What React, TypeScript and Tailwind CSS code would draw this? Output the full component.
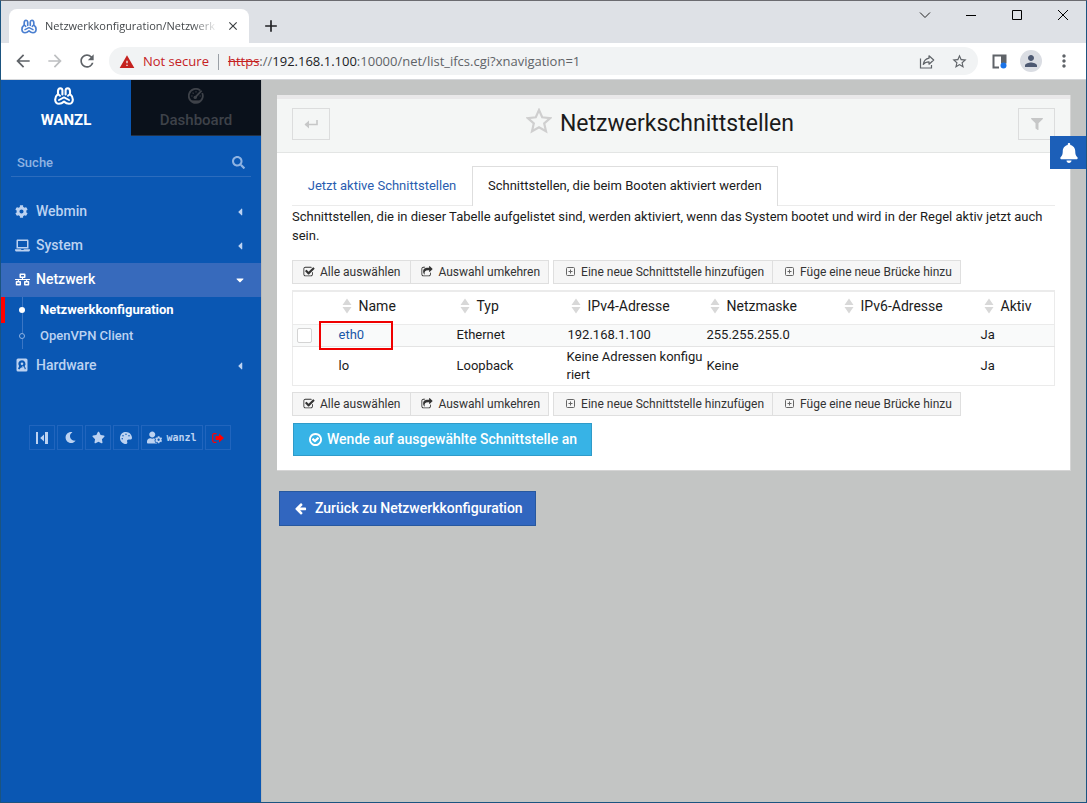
import React from "react";
import {
  FaBell,
  FaCaretDown,
  FaCaretLeft,
  FaCog,
  FaFilter,
  FaLaptop,
  FaMoon,
  FaNetworkWired,
  FaPalette,
  FaSearch,
  FaStar,
  FaUserCog,
} from "react-icons/fa";
import { MdArrowBack, MdArrowForward, MdClose, MdAdd, MdMoreVert, MdPerson, MdRefresh, MdStarBorder, MdWarning } from "react-icons/md";

type IconProps = { className?: string };

const WebminLogo = ({ className }: IconProps) => (
  <svg viewBox="0 0 20 18" fill="none" stroke="currentColor" strokeLinecap="round" strokeLinejoin="round" className={className} aria-hidden="true">
    <path
      d="M8.400 7.500V3.400Q8.200 1.200 6.400 1.200Q4 1.400 4 4.200V7Q1 9.500 1.200 13Q1.500 16.800 5 16.800Q7.500 16.800 10 14.600Q12.500 16.800 15 16.800Q18.500 16.800 18.800 13Q19 9.500 16 7V4.200Q16 1.400 13.600 1.200Q11.800 1.200 11.600 3.400V7.500"
      strokeWidth="2.100"
    />
    <path d="M5 13L10 10.400L15 13M4.200 7.200L6 8.800M15.800 7.200L14 8.800" strokeWidth="1.900" />
  </svg>
);

const ArrowLeft = ({ className }: IconProps) => (
  <svg viewBox="0 0 1792 1792" fill="currentColor" className={className} aria-hidden="true">
    <path d="M1664 896v128q0 53-32.5 90.5t-84.5 37.5h-704l293 294q38 36 38 90t-38 90l-75 76q-37 37-90 37-52 0-91-37l-651-652q-37-37-37-90 0-52 37-91l651-650q38-38 91-38 52 0 90 38l75 74q38 38 38 91t-38 91l-293 293h704q52 0 84.5 37.5t32.5 90.5z" />
  </svg>
);

const CheckSquare = ({ className }: IconProps) => (
  <svg viewBox="0 0 1792 1792" fill="currentColor" className={className} aria-hidden="true">
    <path d="M1472 930v318q0 119-84.5 203.5t-203.5 84.5h-832q-119 0-203.5-84.5t-84.5-203.5v-832q0-119 84.5-203.5t203.5-84.5h832q63 0 117 25 15 7 18 23 3 17-9 29l-49 49q-10 10-23 10-3 0-9-2-23-6-45-6h-832q-66 0-113 47t-47 113v832q0 66 47 113t113 47h832q66 0 113-47t47-113v-254q0-13 9-22l64-64q10-10 23-10 6 0 12 3 20 8 20 29zm231-489l-814 814q-24 24-57 24t-57-24l-430-430q-24-24-24-57t24-57l110-110q24-24 57-24t57 24l263 263 647-647q24-24 57-24t57 24l110 110q24 24 24 57t-24 57z" />
  </svg>
);

const ShareSquare = ({ className }: IconProps) => (
  <svg viewBox="0 0 1792 1792" fill="currentColor" className={className} aria-hidden="true">
    <path d="M1472 989v259q0 119-84.5 203.5t-203.5 84.5h-832q-119 0-203.5-84.5t-84.5-203.5v-832q0-119 84.5-203.5t203.5-84.5h255q13 0 22.5 9.5t9.5 22.5q0 27-26 32-77 26-133 60-10 4-16 4h-112q-66 0-113 47t-47 113v832q0 66 47 113t113 47h832q66 0 113-47t47-113v-214q0-19 18-29 28-13 54-37 16-16 35-8 21 9 21 29zm237-496l-384 384q-18 19-45 19-12 0-25-5-39-17-39-59v-192h-160q-323 0-438 131-119 137-74 473 3 23-20 34-8 2-12 2-16 0-26-13-10-14-21-31t-39.5-68.5-49.5-99.5-38.5-114-17.5-122q0-49 3.500-91t14-90 28-88 47-81.500 68.500-74 94.500-61.500 124.500-48.500 159.500-30.500 196.500-11h160v-192q0-42 39-59 13-5 25-5 26 0 45 19l384 384q19 19 19 45t-19 45z" />
  </svg>
);

const CheckCircle = ({ className }: IconProps) => (
  <svg viewBox="128 128 1536 1536" fill="currentColor" className={className} aria-hidden="true">
    <path d="M1299 813l-422 422q-19 19-45 19t-45-19l-294-294q-19-19-19-45t19-45l102-102q19-19 45-19t45 19l147 147 275-275q19-19 45-19t45 19l102 102q19 19 19 45t-19 45zm141 83q0-148-73-273t-198-198-273-73-273 73-198 198-73 273 73 273 198 198 273 73 273-73 198-198 73-273zm224 0q0 209-103 385.5t-279.5 279.5-385.5 103-385.5-103-279.5-279.5-103-385.5 103-385.5 279.5-279.5 385.5-103 385.5 103 279.5 279.5 103 385.5z" />
  </svg>
);

const PlusSquare = ({ className }: IconProps) => (
  <svg viewBox="0 0 12 12" fill="none" stroke="#666" className={className} aria-hidden="true">
    <rect x="2.500" y="1.500" width="8" height="8" rx="1" />
    <path d="M6.500 3.500v4M4.500 5.500h4" />
  </svg>
);

const Gauge = ({ className }: IconProps) => (
  <svg viewBox="0 0 16 16" fill="none" stroke="currentColor" className={className} aria-hidden="true">
    <path d="M12.2 2.4A7 7 0 1 0 14.2 5" strokeWidth="1.8" />
    <path d="M7.2 9.4 13.6 2.6" strokeWidth="1.8" />
    <circle cx="7.2" cy="9.4" r="1.7" fill="currentColor" stroke="none" />
    <path d="M3.2 8h1.4M4.6 4.6l1 1M8 3.2v1.4M11.6 8h1.2" strokeWidth="1.2" />
    <path d="M4 12.4h8v1.6H4z" fill="currentColor" stroke="none" />
  </svg>
);

const Disk = ({ className }: IconProps) => (
  <svg viewBox="0 0 12 14" className={className} aria-hidden="true">
    <rect x="0.5" y="0.5" width="11" height="13" rx="1.5" fill="currentColor" />
    <path d="M6 2.2a3.700 3.700 0 0 0-2.900 6L2 10.800l1.400.8 1.400-1.800L7.200 9l1.800 2.600.9-1-1.200-2.400A3.700 3.700 0 0 0 6 2.200z" fill="#0a57b3" />
    <circle cx="6" cy="5.800" r="1.300" fill="currentColor" />
    <path d="M6.400 7.800l2 2.600" stroke="currentColor" strokeWidth="1" />
  </svg>
);

const Collapse = ({ className }: IconProps) => (
  <svg viewBox="0 0 12 12" fill="currentColor" className={className} aria-hidden="true">
    <path d="M0 0h2v12H0zM9 0h3v12H9zM8 2.5v7L4.2 6z" />
  </svg>
);

const SignOut = ({ className }: IconProps) => (
  <svg viewBox="0 0 12 10" className={className} aria-hidden="true">
    <path d="M4.500.7H2.200Q.7.7.7 2.200v5.600q0 1.500 1.500 1.500h2.300" fill="none" stroke="currentColor" strokeWidth="1.2" />
    <path d="M3.500 3h3.500V.6L12 5 7 9.400V7H3.500z" fill="currentColor" />
  </svg>
);

const ReturnArrow = ({ className }: IconProps) => (
  <svg viewBox="0 0 14 10" fill="none" stroke="currentColor" className={className} aria-hidden="true">
    <path d="M13 1v4.5H1.5" strokeWidth="1.6" />
    <path d="M5 1.5V9.5L.5 5.5z" fill="currentColor" stroke="none" />
  </svg>
);

const TitleStar = ({ className }: IconProps) => (
  <svg viewBox="0 0 26 26" fill="none" stroke="currentColor" className={className} aria-hidden="true">
    <path d="M13 2l3.200 7.300 8 .8-6 5.300 1.800 7.900-7-4.100-7 4.100 1.800-7.900-6-5.300 8-.8z" strokeWidth="2.200" />
  </svg>
);

const SortArrows = () => (
  <svg viewBox="0 0 10 16" fill="#d8d8d8" className="h-4 w-2.5 shrink-0" aria-hidden="true">
    <path d="M5 .500l4.500 6.500h-9zM5 15.500l4.500-6.500h-9z" />
  </svg>
);

const ShareIcon = ({ className }: IconProps) => (
  <svg viewBox="0 0 16 16" fill="none" stroke="currentColor" className={className} aria-hidden="true">
    <path d="M1.500 4.500v9.500h11v-3" strokeWidth="1.200" />
    <path d="M10 1.800l4.700 4.200L10 10.200V7.800c-2.600 0-4.300.7-5.700 2.600.4-3 2.300-5.600 5.700-6.200z" strokeWidth="1.200" strokeLinejoin="round" />
  </svg>
);

function BrowserChrome() {
  return (
    <header className="font-['Open_Sans',sans-serif] text-[#202124]">
      <div className="flex h-[42px] items-end bg-[#dee1e6] pl-2">
        <div className="flex h-[34px] w-60 items-center gap-2 rounded-t-lg bg-white pr-[9px] pl-3">
          <WebminLogo className="h-[15px] w-4 shrink-0 text-[#4a7fd0]" />
          <span className="w-[174px] bg-linear-to-r from-[#3c4043] from-85% to-transparent bg-clip-text text-[11px] whitespace-nowrap text-transparent">
            Netzwerkkonfiguration/Netzwerk
          </span>
          <button type="button" aria-label="Close tab" className="shrink-0">
            <MdClose className="size-3.5 text-[#3c4043]" />
          </button>
        </div>
        <button type="button" aria-label="New tab" className="mb-[7px] ml-3">
          <MdAdd className="size-5" />
        </button>
        <div className="mb-[22px] ml-auto flex items-center gap-[34px] pr-[17px]">
          <button type="button" aria-label="Search tabs">
            <svg viewBox="0 0 12 12" className="size-3" fill="none" stroke="#222"><path d="M1 3.500l5 5 5-5" /></svg>
          </button>
          <button type="button" aria-label="Minimize">
            <svg viewBox="0 0 12 12" className="size-3" fill="none" stroke="#000"><path d="M1 6.500h10" /></svg>
          </button>
          <button type="button" aria-label="Maximize">
            <svg viewBox="0 0 12 12" className="size-3" fill="none" stroke="#000"><path d="M1.500 1.500h9v9h-9z" /></svg>
          </button>
          <button type="button" aria-label="Close">
            <svg viewBox="0 0 12 12" className="size-3" fill="none" stroke="#000"><path d="M1 1l10 10M11 1L1 11" /></svg>
          </button>
        </div>
      </div>
      <div className="flex h-[37px] items-center border-b border-[#d5d7da] bg-white px-3">
        <button type="button" aria-label="Back"><MdArrowBack className="size-5 text-[#5f6368]" /></button>
        <button type="button" aria-label="Forward" className="ml-3"><MdArrowForward className="size-5 text-[#bdbfc1]" /></button>
        <button type="button" aria-label="Reload" className="ml-3"><MdRefresh className="size-5 text-[#5f6368]" /></button>
        <div className="ml-3 flex h-7 flex-1 items-center rounded-full bg-[#f1f3f4] px-2.5 pt-px text-[13px]">
          <MdWarning className="size-4 text-[#c5221f]" />
          <span className="ml-2 text-[#c5221f]">Not secure</span>
          <span className="mx-[9px] h-4 w-px bg-[#9aa0a6]" />
          <span className="whitespace-nowrap">
            <span className="text-[#c5221f] line-through">https</span>
            <span className="text-[#5f6368]">://</span>192.168.1.100
            <span className="text-[#5f6368]">:10000/net/list_ifcs.cgi?xnavigation=1</span>
          </span>
          <button type="button" aria-label="Share" className="ml-auto"><ShareIcon className="size-4 text-[#5f6368]" /></button>
          <button type="button" aria-label="Bookmark" className="ml-4"><MdStarBorder className="size-[17px] text-[#5f6368]" /></button>
        </div>
        <button type="button" aria-label="Side panel" className="ml-3.5">
          <svg viewBox="0 0 15 15" className="size-[15px]">
            <path d="M1.500 1.500h7v11.500h-7z" fill="#fff" />
            <path d="M.5.500H14.500v9H9V2.500H2.500v10H7V14.500H.5z" fill="#5f6368" />
            <circle cx="11.500" cy="11.500" r="3" fill="#1a73e8" />
          </svg>
        </button>
        <button type="button" aria-label="Profile" className="ml-[13px] flex size-[22px] items-center justify-center rounded-full bg-[#dadde3]">
          <MdPerson className="size-[18px] text-[#4d5972]" />
        </button>
        <button type="button" aria-label="Menu" className="ml-3"><MdMoreVert className="size-5 text-[#5f6368]" /></button>
      </div>
    </header>
  );
}

type NavRowProps = { icon: React.ReactNode; label: string; active?: boolean };

function NavRow({ icon, label, active }: NavRowProps) {
  return (
    <button
      type="button"
      className={`flex h-[34px] w-full items-center pr-4 pb-0.5 pl-3.5 text-left text-sm font-medium ${active ? "bg-[#376abc] text-white" : "text-[#bcd2f1]"}`}
    >
      <span className="flex w-[21px] shrink-0 items-center">{icon}</span>
      <span>{label}</span>
      <span className="ml-auto flex w-2.5 justify-center pt-0.5">
        {active ? <FaCaretDown className="size-3 shrink-0" /> : <FaCaretLeft className="size-3 shrink-0" />}
      </span>
    </button>
  );
}

const toolButton = "flex h-[25px] items-center justify-center border border-[#2165bd] text-[#bcd2f1]";

function Sidebar() {
  return (
    <nav className="w-[260px] shrink-0 bg-[#0a57b3] font-medium">
      <div className="grid h-14 grid-cols-2 text-[15px] leading-5">
        <a href="#webmin" className="flex flex-col items-center pt-1.5 font-bold text-white">
          <WebminLogo className="my-px mr-1 h-[18px] w-5" />
          <span className="mt-1">WANZL</span>
        </a>
        <a href="#dashboard" className="flex flex-col items-center border-b border-[#243246] bg-[#0a111b] pt-1.5 text-[#3e4249]">
          <Gauge className="my-0.5 size-4" />
          <span className="mt-1">Dashboard</span>
        </a>
      </div>
      <div className="mx-2.5 mt-3 mb-[18px] flex h-[29px] items-center border-b border-[#2c6cbd] px-1.5">
        <input aria-label="Suche" placeholder="Suche" className="w-full bg-transparent pt-0.5 text-[13px] text-white outline-none placeholder:text-[#8fb3e2]" />
        <FaSearch className="size-[13px] shrink-0 text-[#8fb3e2]" />
      </div>
      <NavRow icon={<FaCog className="size-[13px]" />} label="Webmin" />
      <NavRow icon={<FaLaptop className="size-[15px]" />} label="System" />
      <NavRow icon={<FaNetworkWired className="size-[15px]" />} label="Netzwerk" active />
      <ul className="text-[13px] leading-[26px]">
        <li className="flex border-l-4 border-[#ff0000] pl-[15px]">
          <span className="flex w-1 flex-col items-center">
            <span className="h-[10px] w-px bg-[#3b76c4]" />
            <span className="size-1.5 shrink-0 rounded-full bg-white" />
            <span className="h-[10px] w-px bg-[#3b76c4]" />
          </span>
          <a href="#netconf" className="ml-4 font-bold text-white">Netzwerkkonfiguration</a>
        </li>
        <li className="flex border-l-4 border-transparent pl-[15px]">
          <span className="flex w-1 flex-col items-center">
            <span className="h-[10px] w-px bg-[#3b76c4]" />
            <span className="size-1.5 shrink-0 rounded-full border border-[#8fb3e2]" />
            <span className="h-[10px] w-px bg-[#3b76c4]" />
          </span>
          <a href="#openvpn" className="ml-4 text-[#bcd2f1]">OpenVPN Client</a>
        </li>
      </ul>
      <NavRow icon={<Disk className="ml-px h-[14px] w-3" />} label="Hardware" />
      <div className="mt-[42px] ml-7 flex gap-0.5">
        <button type="button" aria-label="Collapse menu" className={`${toolButton} w-[26px]`}><Collapse className="size-3" /></button>
        <button type="button" aria-label="Night mode" className={`${toolButton} w-[26px]`}><FaMoon className="size-[11px]" /></button>
        <button type="button" aria-label="Favorites" className={`${toolButton} w-[26px]`}><FaStar className="size-[13px]" /></button>
        <button type="button" aria-label="Theme" className={`${toolButton} w-[26px]`}><FaPalette className="size-3" /></button>
        <button type="button" className={`${toolButton} w-[62px] gap-1 font-['DejaVu_Sans_Mono',monospace] text-[10px] font-bold`}>
          <FaUserCog className="size-[15px]" />
          wanzl
        </button>
        <button type="button" aria-label="Log out" className={`${toolButton} w-[26px]`}><SignOut className="h-2.5 w-3 text-[#ff0000]" /></button>
      </div>
    </nav>
  );
}

const smallButton = "flex h-6 items-center gap-[5px] border border-[#dfdfdf] bg-[#f6f6f6] pl-2.5 text-xs text-[#333]";

function TableActions() {
  return (
    <div className="flex">
      <button type="button" className={`${smallButton} pr-2.5`}><CheckSquare className="size-3" />Alle auswählen</button>
      <button type="button" className={`${smallButton} -ml-px pr-2`}><ShareSquare className="size-3" />Auswahl umkehren</button>
      <button type="button" className={`${smallButton} ml-1 pr-2`}><PlusSquare className="size-3" />Eine neue Schnittstelle hinzufügen</button>
      <button type="button" className={`${smallButton} -ml-px pr-2`}><PlusSquare className="size-3" />Füge eine neue Brücke hinzu</button>
    </div>
  );
}

const columns = ["Name", "Typ", "IPv4-Adresse", "Netzmaske", "IPv6-Adresse", "Aktiv"];

function InterfaceTable() {
  return (
    <table className="my-1.5 w-full table-fixed border-collapse border border-[#ebebeb] text-[13px] leading-[18px]">
      <colgroup>
        <col className="w-[42px]" />
        <col className="w-[118px]" />
        <col className="w-[111px]" />
        <col className="w-[139px]" />
        <col className="w-[134px]" />
        <col className="w-[140px]" />
        <col className="w-[78px]" />
      </colgroup>
      <thead>
        <tr className="h-[33px] border-t-2 border-b border-[#ebebeb]">
          <td />
          {columns.map((name) => (
            <th key={name} scope="col" className="p-0 pb-[3px] pl-[7px] text-left text-sm font-normal">
              <span className="flex items-center gap-[7px]"><SortArrows />{name}</span>
            </th>
          ))}
        </tr>
      </thead>
      <tbody className="break-all">
        <tr className="h-[22px] border-b border-[#e4e4e4] bg-[#f9fafa]">
          <td className="p-0 pl-1">
            <input type="checkbox" aria-label="eth0" className="block size-[15px] appearance-none rounded-xs border border-[#d4d4d4] bg-white" />
          </td>
          <td className="relative p-0 pl-1">
            <a href="#eth0" className="text-[#1a57a8]">eth0</a>
            <span className="absolute -top-1 -left-4 h-[29px] w-[74px] border-2 border-[#f00000]" />
          </td>
          <td className="p-0 pl-1">Ethernet</td>
          <td className="p-0 pl-1">192.168.1.100</td>
          <td className="p-0 pl-1">255.255.255.0</td>
          <td />
          <td className="p-0 pl-1">Ja</td>
        </tr>
        <tr className="h-[39px]">
          <td />
          <td className="p-0 pl-1">lo</td>
          <td className="p-0 pl-1">Loopback</td>
          <td className="p-0 pl-[3px]">Keine Adressen konfiguriert</td>
          <td className="p-0 pl-1">Keine</td>
          <td />
          <td className="p-0 pl-1">Ja</td>
        </tr>
      </tbody>
    </table>
  );
}

export default function App() {
  return (
    <div className="flex min-h-screen flex-col border border-t-[#6b6b70] border-r-[#1b5480] border-b-[#1b5480] border-l-[#1b5480] font-['Roboto',sans-serif] text-[#1b1b1b]">
      <BrowserChrome />
      <div className="relative flex flex-1 bg-[#c3c5c4]">
        <Sidebar />
        <main className="min-w-0 flex-1 border-l border-[#b8bab9] px-[15px] pt-[15px]">
          <section className="border-r border-b border-[#d5d5d5] bg-white">
            <div className="flex h-[58px] items-start border-t-4 border-b border-t-[#e9e8e9] border-b-[#e3e5e4] bg-[#f4f6f5] px-[15px] pt-[9px]">
              <button type="button" aria-label="Zurück" className="flex h-8 w-[38px] items-center justify-center border border-[#dcdddd] text-[#c6c7c7]">
                <ReturnArrow className="h-2.5 w-3.5" />
              </button>
              <h1 className="flex flex-1 items-start justify-center gap-2 pr-7 text-[23px] leading-8">
                <TitleStar className="size-[26px] text-[#cfcfcf]" />
                Netzwerkschnittstellen
              </h1>
              <button type="button" aria-label="Filter" className="flex h-8 w-[37px] items-center justify-center border border-[#dcdddd] text-[#c6c7c7]">
                <FaFilter className="size-3" />
              </button>
            </div>
            <div className="px-[15px] pt-[13px] pb-3.5">
              <div role="tablist" className="flex h-10 border-b border-[#ebebeb] text-[13px]">
                <button type="button" role="tab" aria-selected="false" className="w-[180px] text-[#2a5db0]">Jetzt aktive Schnittstellen</button>
                <button type="button" role="tab" aria-selected="true" className="-mb-px border border-b-0 border-[#dedede] bg-white px-[15px] pb-0.5">
                  Schnittstellen, die beim Booten aktiviert werden
                </button>
              </div>
              <p className="mt-px mb-[15px] text-[13px] leading-[19px]">
                Schnittstellen, die in dieser Tabelle aufgelistet sind, werden aktiviert, wenn das System bootet und wird in der Regel aktiv jetzt auch sein.
              </p>
              <TableActions />
              <InterfaceTable />
              <TableActions />
              <button type="button" className="mt-[7px] ml-px flex h-[33px] items-center gap-[5px] border border-[#2f9bc9] bg-[#37b3e6] pr-3.5 pl-[15px] text-sm font-medium text-white">
                <CheckCircle className="size-[13px]" />
                Wende auf ausgewählte Schnittstelle an
              </button>
            </div>
          </section>
          <a href="#netconf" className="mt-5 ml-0.5 inline-flex h-[35px] items-center gap-2 border border-[#27589f] bg-[#3166bf] pr-3 pl-3.5 text-sm font-medium text-white">
            <ArrowLeft className="size-[13px]" />
            Zurück zu Netzwerkkonfiguration
          </a>
        </main>
        <button type="button" aria-label="Benachrichtigungen" className="absolute top-14 right-0 flex h-[33px] w-9 items-center justify-center bg-[#1c5fb8] pl-0.5 text-white">
          <FaBell className="size-5" />
        </button>
      </div>
    </div>
  );
}
